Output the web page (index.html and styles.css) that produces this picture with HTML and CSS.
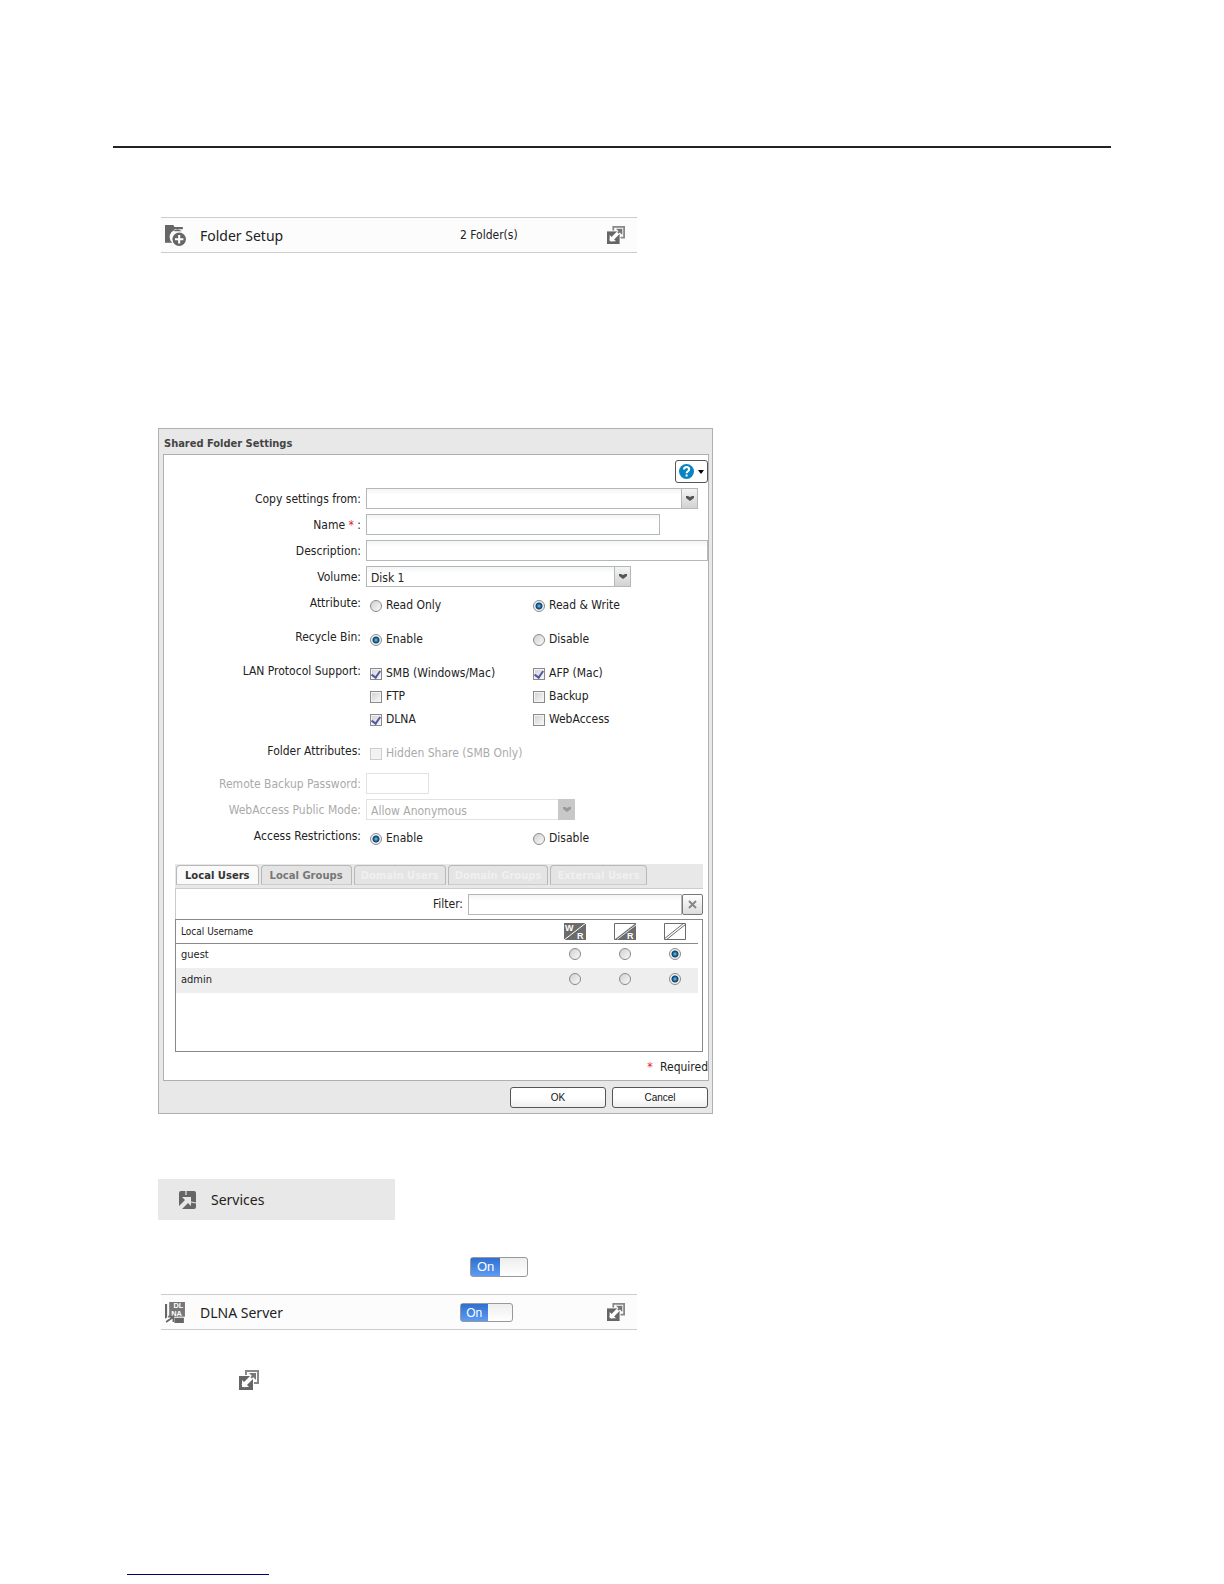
FILE: index.html
```html
<!DOCTYPE html>
<html lang="en">
<head>
    <meta charset="UTF-8">
    <title>Shared Folder Settings</title>
    <link rel="stylesheet" href="styles.css">
</head>
<body>
    <svg class="defs" aria-hidden="true">
        <symbol id="icon-open" viewBox="0 0 20 20">
            <path d="M7 5V1h12v12h-4" fill="none" stroke="#888" stroke-width="2"/>
            <path d="M0 6h14v14H0z" fill="#666"/>
            <path d="M4 16L15 5" stroke="#fff" stroke-width="4"/>
            <path d="M3 10v7h7z" fill="#fff"/>
            <path d="M10 3h7v7z" fill="#777"/>
            <path d="M12 8l3-3" stroke="#777" stroke-width="2"/>
            <path d="M6 14l6-6" stroke="#fff" stroke-width="2"/>
        </symbol>
        <symbol id="icon-arrow" viewBox="0 0 10 8">
            <path d="M1 1l2 0 2 1 2-1h2v2L5 6 1 3z" fill="currentColor"/>
        </symbol>
    </svg>

    <header class="page-head"></header>

    <main>
        <div class="item folder-item">
            <svg class="item-icon" viewBox="0 0 20 20">
                <path d="M0 0h8l1 2h8v2H9v2h7a7 7 0 0 0-9 11H0z" fill="#666"/>
                <circle cx="13.500" cy="13.500" r="6.400" fill="#666"/>
                <path d="M13.500 9.500v8M9.500 13.500h8" stroke="#fff" stroke-width="2"/>
            </svg>
            <span class="item-name">Folder Setup</span>
            <span class="item-value">2 Folder(s)</span>
            <button type="button" class="open" aria-label="Open"><svg><use href="#icon-open"/></svg></button>
        </div>

        <form class="dialog">
            <h2>Shared Folder Settings</h2>
            <div class="panel">
                <button type="button" class="help" aria-label="Help">
                    <svg viewBox="0 0 15 15" width="15" height="15">
                        <circle cx="7.500" cy="7.500" r="7.500" fill="#0a84c0"/>
                        <path d="M5 5.600c0-3.400 5.200-3.200 5.200-.3 0 1.900-2.600 1.900-2.600 3.900M7.600 10.600v2" fill="none" stroke="#fff" stroke-width="2"/>
                    </svg>
                    <svg viewBox="0 0 6 4" width="6" height="4"><path d="M0 0h6L3 4z" fill="#000"/></svg>
                </button>

                <div class="row">
                    <label for="copyFrom">Copy settings from:</label>
                    <div class="combo copy-from">
                        <select id="copyFrom"><option></option></select>
                        <span class="trigger"><svg><use href="#icon-arrow"/></svg></span>
                    </div>
                </div>
                <div class="row">
                    <label for="name">Name <span class="star">*</span> :</label>
                    <input type="text" id="name" class="field name">
                </div>
                <div class="row">
                    <label for="description">Description:</label>
                    <input type="text" id="description" class="field">
                </div>
                <div class="row">
                    <label for="volume">Volume:</label>
                    <div class="combo volume">
                        <select id="volume"><option>Disk 1</option></select>
                        <span class="trigger"><svg><use href="#icon-arrow"/></svg></span>
                    </div>
                </div>
                <div class="row" role="radiogroup" aria-labelledby="attributeLabel">
                    <span class="label" id="attributeLabel">Attribute:</span>
                    <div class="options">
                        <label><input type="radio" name="attribute">Read Only</label>
                        <label><input type="radio" name="attribute" checked>Read &amp; Write</label>
                    </div>
                </div>
                <div class="row" role="radiogroup" aria-labelledby="recycleLabel">
                    <span class="label" id="recycleLabel">Recycle Bin:</span>
                    <div class="options">
                        <label><input type="radio" name="recycle" checked>Enable</label>
                        <label><input type="radio" name="recycle">Disable</label>
                    </div>
                </div>
                <div class="row" role="group" aria-labelledby="lanLabel">
                    <span class="label" id="lanLabel">LAN Protocol Support:</span>
                    <div class="options">
                        <label><input type="checkbox" checked>SMB (Windows/Mac)</label>
                        <label><input type="checkbox" checked>AFP (Mac)</label>
                        <label><input type="checkbox">FTP</label>
                        <label><input type="checkbox">Backup</label>
                        <label><input type="checkbox" checked>DLNA</label>
                        <label><input type="checkbox">WebAccess</label>
                    </div>
                </div>
                <div class="row" role="group" aria-labelledby="folderLabel">
                    <span class="label" id="folderLabel">Folder Attributes:</span>
                    <div class="options single">
                        <label class="off"><input type="checkbox" disabled>Hidden Share (SMB Only)</label>
                    </div>
                </div>
                <div class="row off">
                    <label for="backupPassword">Remote Backup Password:</label>
                    <input type="password" id="backupPassword" class="field password" disabled>
                </div>
                <div class="row off">
                    <label for="publicMode">WebAccess Public Mode:</label>
                    <div class="combo public-mode">
                        <select id="publicMode" disabled><option>Allow Anonymous</option></select>
                        <span class="trigger"><svg><use href="#icon-arrow"/></svg></span>
                    </div>
                </div>
                <div class="row" role="radiogroup" aria-labelledby="accessLabel">
                    <span class="label" id="accessLabel">Access Restrictions:</span>
                    <div class="options">
                        <label><input type="radio" name="access" checked>Enable</label>
                        <label><input type="radio" name="access">Disable</label>
                    </div>
                </div>

                <div class="users">
                    <div class="tabs">
                        <button type="button" class="active">Local Users</button>
                        <button type="button">Local Groups</button>
                        <button type="button" disabled>Domain Users</button>
                        <button type="button" disabled>Domain Groups</button>
                        <button type="button" disabled>External Users</button>
                    </div>
                    <div class="filter">
                        <label for="filter">Filter:</label>
                        <input type="text" id="filter" class="field">
                        <button type="button" aria-label="Clear">
                            <svg viewBox="0 0 9 9" width="9" height="9"><path d="M1 1l7 7M8 1L1 8" stroke="#888" stroke-width="2"/></svg>
                        </button>
                    </div>
                    <div class="list">
                        <table>
                            <thead>
                                <tr>
                                    <th>Local Username</th>
                                    <th class="pick" aria-label="Read and write">
                                        <svg viewBox="0 0 22 17" width="22" height="17">
                                            <path d="M0 0h22v17H0z" fill="#6b6b6b"/>
                                            <path d="M0 17L22 0" stroke="#fff" stroke-width="1"/>
                                            <text x="1" y="8">W</text><text x="13" y="16">R</text>
                                        </svg>
                                    </th>
                                    <th class="pick" aria-label="Read only">
                                        <svg viewBox="0 0 22 17" width="22" height="17">
                                            <path d="M.5.5h21v16H.5z" fill="#fff" stroke="#6b6b6b"/>
                                            <path d="M0 17L22 0v17z" fill="#6b6b6b"/>
                                            <path d="M3 16.500L22 2" stroke="#fff" stroke-width=".8"/>
                                            <text x="13" y="16">R</text>
                                        </svg>
                                    </th>
                                    <th class="pick" aria-label="No access">
                                        <svg viewBox="0 0 22 17" width="22" height="17">
                                            <path d="M.5.5h21v16H.5z" fill="#fff" stroke="#6b6b6b"/>
                                            <path d="M0 16L20 0M2 17L22 1" stroke="#6b6b6b" stroke-width="1"/>
                                        </svg>
                                    </th>
                                </tr>
                            </thead>
                            <tbody>
                                <tr>
                                    <td>guest</td>
                                    <td class="pick"><input type="radio" name="guest" aria-label="guest read and write"></td>
                                    <td class="pick"><input type="radio" name="guest" aria-label="guest read only"></td>
                                    <td class="pick"><input type="radio" name="guest" aria-label="guest no access" checked></td>
                                </tr>
                                <tr>
                                    <td>admin</td>
                                    <td class="pick"><input type="radio" name="admin" aria-label="admin read and write"></td>
                                    <td class="pick"><input type="radio" name="admin" aria-label="admin read only"></td>
                                    <td class="pick"><input type="radio" name="admin" aria-label="admin no access" checked></td>
                                </tr>
                            </tbody>
                        </table>
                    </div>
                </div>
                <p class="required"><span class="star">*</span> Required</p>
            </div>
            <div class="buttons">
                <button type="button">OK</button>
                <button type="button">Cancel</button>
            </div>
        </form>

        <div class="services">
            <svg viewBox="0 0 18 18" width="18" height="18">
                <rect width="17" height="18" rx="2" fill="#666"/>
                <path d="M0 18v-3l6-6-3-3h9v9l-3-3-6 6z" fill="#e8e8e8"/>
                <path d="M7 0v4M12 11l5 1" stroke="#e8e8e8" stroke-width="1.200"/>
            </svg>
            <span>Services</span>
        </div>

        <button type="button" class="switch large"><span>On</span></button>

        <div class="item">
            <svg class="item-icon" viewBox="0 0 20 20">
                <path d="M0 2h2v13h16v5H0z" fill="#666"/>
                <path d="M4 0h15v14H4z" fill="#777"/>
                <text x="8" y="6">DL</text><text x="6" y="13">NA</text>
                <path d="M0 20v-4l3-2h6v6z" fill="#fff"/>
                <path d="M1 19l6-4M3 14h5v5" fill="none" stroke="#666" stroke-width="1.600"/>
            </svg>
            <span class="item-name">DLNA Server</span>
            <span class="item-value"><button type="button" class="switch"><span>On</span></button></span>
            <button type="button" class="open" aria-label="Open"><svg><use href="#icon-open"/></svg></button>
        </div>

        <button type="button" class="open standalone" aria-label="Open"><svg><use href="#icon-open"/></svg></button>
    </main>

    <footer><a href="#" aria-label="Home"></a></footer>
</body>
</html>
```

FILE: styles.css
```css
* {
    box-sizing: border-box;
}
body {
    margin: 0;
    background-color: #fff;
    color: #222;
    font-family: "DejaVu Sans Condensed", "DejaVu Sans", Tahoma, sans-serif;
    font-stretch: condensed;
    font-size: 12px;
}
button, input, select {
    font: inherit;
    color: inherit;
    margin: 0;
}
button {
    padding: 0;
    cursor: pointer;
}
.defs {
    display: none;
}
.page-head {
    height: 148px;
    margin: 0 113px;
    border-bottom: 2px solid #222;
}
main {
    display: flex;
    flex-direction: column;
    align-items: flex-start;
    padding: 69px 113px 0 158px;
}

/* list rows */
.item {
    display: flex;
    align-items: center;
    width: 100%;
    max-width: 476px;
    height: 36px;
    margin-left: 3px;
    padding: 0 12px 0 4px;
    background-color: #fcfcfc;
    border-top: 1px solid #ccc;
    border-bottom: 1px solid #ccc;
}
.item-icon {
    width: 21px;
    height: 21px;
}
.item-icon text {
    font: bold 7px "Liberation Sans", sans-serif;
    fill: #fff;
}
.item-name {
    width: 274px;
    padding-left: 14px;
    font-family: "Noto Sans", sans-serif;
    font-size: 14px;
}
.item-value {
    flex: 1;
}
.open {
    width: 18px;
    height: 18px;
    border: none;
    background: none;
}
.open svg {
    display: block;
    width: 100%;
    height: 100%;
}
.standalone {
    width: 20px;
    height: 20px;
    margin: 40px 0 0 81px;
}

/* dialog */
.dialog {
    width: 100%;
    max-width: 555px;
    margin-top: 175px;
    padding: 0 3px 0 4px;
    background-color: #e8e8e8;
    border: 1px solid #b0b0b0;
}
h2 {
    margin: 0;
    padding-left: 1px;
    font-size: 11px;
    line-height: 29px;
    height: 25px;
    color: #444;
}
.panel {
    display: flex;
    flex-direction: column;
    padding-top: 5px;
    background-color: #fff;
    border: 1px solid #b0b0b0;
}
.help {
    align-self: flex-end;
    display: flex;
    align-items: center;
    justify-content: center;
    gap: 4px;
    width: 33px;
    height: 23px;
    margin-bottom: 5px;
    background-color: #fff;
    border: 1px solid #555;
    border-radius: 3px;
}
.row {
    display: grid;
    grid-template-columns: 197px 1fr;
    column-gap: 5px;
    margin-bottom: 5px;
    line-height: 22px;
}
.row > label, .label {
    height: 21px;
    text-align: right;
}
.star {
    color: #e0202a;
}
.off {
    color: #aaa;
}
.field, .combo select {
    width: 100%;
    height: 21px;
    padding: 0 4px;
    border: 1px solid #b5b8b8;
    border-radius: 0;
    background: linear-gradient(#f3f4f5, #fff 6px);
}
.field:disabled, .combo select:disabled {
    border-color: #e2e2e2;
    background: #fff;
    opacity: 1;
}
.name {
    max-width: 294px;
}
.password {
    max-width: 63px;
}
.combo {
    position: relative;
    height: 21px;
}
.combo select {
    display: block;
    appearance: none;
}
.copy-from {
    max-width: 332px;
}
.volume {
    max-width: 265px;
}
.public-mode {
    max-width: 209px;
}
.trigger {
    position: absolute;
    top: 0;
    right: 0;
    display: flex;
    align-items: center;
    justify-content: center;
    width: 17px;
    height: 21px;
    color: #555;
    background: linear-gradient(#f4f4f4, #d2d2d2);
    border: 1px solid #b5b8b8;
    pointer-events: none;
}
.off .trigger {
    color: #999;
    background: #c8c8c8;
    border-color: #c8c8c8;
}
.trigger svg {
    width: 10px;
    height: 8px;
}
.options {
    display: grid;
    grid-template-columns: 163px 1fr;
    padding: 2px 0 4px 4px;
    line-height: 23px;
}
.single {
    grid-template-columns: 1fr;
    padding-bottom: 3px;
}
.options label {
    display: flex;
    align-items: center;
    gap: 4px;
}
input[type="radio"], input[type="checkbox"] {
    appearance: none;
    width: 12px;
    height: 12px;
    border: 1px solid #8a8a8a;
    background: linear-gradient(135deg, #d0d0d0, #fafafa);
}
input[type="radio"] {
    border-radius: 50%;
}
input[type="radio"]:checked {
    background: radial-gradient(circle at 5px 5px, #7cc4e8 0, #1b6a9c 2px, #0f3f66 3px, #f4f4f4 4px);
}
input[type="checkbox"] {
    display: flex;
    box-shadow: inset 0 0 0 1px #f4f4f4;
}
input[type="checkbox"]:checked::before {
    content: "";
    width: 4px;
    height: 7px;
    margin: 0 auto;
    border: solid #5558a0;
    border-width: 0 2px 2px 0;
    transform: rotate(35deg);
}
input[type="checkbox"]:disabled {
    border-color: #ccc;
    background: #f2f2f2;
}

/* users */
.users {
    margin: 5px 5px 0 11px;
}
.tabs {
    display: flex;
    align-items: flex-end;
    gap: 2px;
    height: 25px;
    padding: 0 1px 3px;
    background-color: #e8e8e8;
    border-bottom: 1px solid #ccc;
    font: bold 10px "DejaVu Sans", sans-serif;
}
.tabs button {
    height: 20px;
    padding: 0 8px;
    color: #777;
    background-color: #e4e4e4;
    border: 1px solid #b8b8b8;
    border-bottom-color: #ccc;
    border-radius: 4px 4px 0 0;
}
.tabs .active {
    color: #333;
    background-color: #fafafa;
}
.tabs button:disabled {
    padding: 0 6px;
    color: #f0f0f0;
}
.filter {
    display: flex;
    align-items: center;
    height: 30px;
    border-left: 1px solid #ccc;
}
.filter label {
    flex: 1;
    text-align: right;
    padding-right: 5px;
}
.filter .field {
    flex: none;
    width: 214px;
}
.filter button {
    display: flex;
    align-items: center;
    justify-content: center;
    width: 21px;
    height: 21px;
    background: linear-gradient(#fff, #ddd);
    border: 1px solid #777;
    border-radius: 2px;
}
.list {
    height: 133px;
    padding-right: 4px;
    border: 1px solid #888;
    font-size: 11px;
}
table {
    width: 100%;
    border-collapse: collapse;
}
th, td {
    height: 25px;
    padding: 0 0 3px 5px;
    text-align: left;
    font-weight: normal;
}
th {
    height: 23px;
    padding-bottom: 0;
    font-size: 10px;
    border-bottom: 1px solid #888;
}
tbody tr:nth-child(2) {
    background-color: #eee;
}
.pick {
    width: 50px;
    padding-left: 4px;
    text-align: center;
}
.pick svg, .pick input {
    display: block;
    margin: 0 auto;
}
.pick text {
    font: bold 9px "Liberation Sans", sans-serif;
    fill: #fff;
}
.required {
    margin: 0;
    text-align: right;
    line-height: 30px;
    height: 28px;
}
.required .star {
    margin-right: 4px;
}
.buttons {
    display: flex;
    justify-content: flex-end;
    gap: 6px;
    padding: 6px 1px 5px;
}
.buttons button {
    width: 96px;
    height: 21px;
    font: 10px "Liberation Sans", sans-serif;
    color: #111;
    background: linear-gradient(#fff 50%, #eee);
    border: 1px solid #555;
    border-radius: 3px;
}

/* services */
.services {
    display: flex;
    align-items: center;
    gap: 14px;
    width: 237px;
    height: 41px;
    margin-top: 65px;
    padding-left: 21px;
    background-color: #e8e8e8;
    font-family: "Noto Sans", sans-serif;
    font-size: 14px;
}
.switch {
    display: flex;
    width: 53px;
    height: 19px;
    background: linear-gradient(#eee, #fff);
    border: 1px solid #999;
    border-radius: 3px;
    font: 12px "Liberation Sans", sans-serif;
    color: #fff;
}
.switch span {
    width: 52%;
    height: 100%;
    line-height: 18px;
    background: linear-gradient(#2f6fd0, #5c9cf5);
}
.large {
    width: 58px;
    height: 20px;
    margin: 37px 0 17px 312px;
    font-size: 13px;
}
footer {
    padding: 184px 0 8px 127px;
}
footer a {
    display: block;
    width: 142px;
    border-bottom: 1px solid #00007a;
}
```
